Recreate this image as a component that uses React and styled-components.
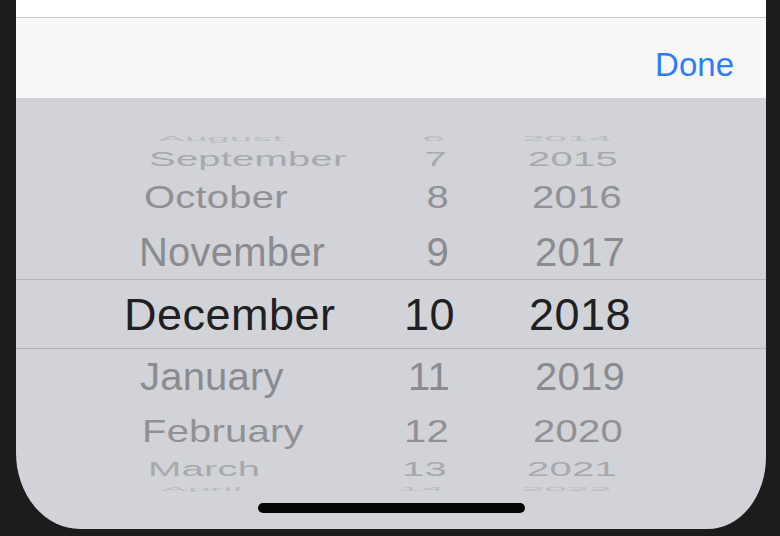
import styled, { createGlobalStyle } from "styled-components";

const GlobalStyle = createGlobalStyle`
  html, body {
    margin: 0;
    padding: 0;
    background: #1c1c1c;
    font-family: "Liberation Sans", Arial, sans-serif;
  }
  #root {
    height: 536px;
    overflow: hidden;
  }
`;

const rows = [
  { m: "August", d: "6", y: "2014", h: 23, sy: 0.18, mx: 34, dx: -5, yx: -12, tone: 4 },
  { m: "September", d: "7", y: "2015", h: 20, sy: 0.5, mx: 25, dx: -3, yx: -6, tone: 3 },
  { m: "October", d: "8", y: "2016", h: 55, sy: 0.8, mx: 20, dx: -1, yx: -2, tone: 2 },
  { m: "November", d: "9", y: "2017", h: 55, sy: 1, mx: 15, dx: -1, yx: 1, tone: 1 },
  { m: "December", d: "10", y: "2018", h: 70, sy: 1, mx: 0, dx: 5, yx: 1, tone: 0 },
  { m: "January", d: "11", y: "2019", h: 56, sy: 0.95, mx: 16, dx: 0, yx: 1, tone: 1 },
  { m: "February", d: "12", y: "2020", h: 51, sy: 0.8, mx: 18, dx: -1, yx: -1, tone: 2 },
  { m: "March", d: "13", y: "2021", h: 26, sy: 0.5, mx: 24, dx: -3, yx: -7, tone: 3 },
  { m: "April", d: "14", y: "2022", h: 13, sy: 0.15, mx: 37, dx: -6, yx: -12, tone: 4 },
];

const tones = ["#202022", "#8b8b8f", "#919195", "#a8a9ad", "#babbbf"];

function App() {
  return (
    <>
      <GlobalStyle />
      <Screen>
        <TopStrip />
        <Toolbar>
          <DoneButton>Done</DoneButton>
        </Toolbar>
        <Picker>
          {rows.map((r) => (
            <Row key={r.m} $h={r.h} $selected={r.tone === 0}>
              <MonthCell>
                <Item
                  $tone={r.tone}
                  style={{ transform: `translateX(${r.mx}px) scaleY(${r.sy})` }}
                >
                  {r.m}
                </Item>
              </MonthCell>
              <DayCell>
                <Item
                  $tone={r.tone}
                  style={{ transform: `translateX(${r.dx}px) scaleY(${r.sy})` }}
                >
                  {r.d}
                </Item>
              </DayCell>
              <YearCell>
                <Item
                  $tone={r.tone}
                  style={{ transform: `translateX(${r.yx}px) scaleY(${r.sy})` }}
                >
                  {r.y}
                </Item>
              </YearCell>
            </Row>
          ))}
          <HomeIndicator />
        </Picker>
      </Screen>
    </>
  );
}

export default App;

const Screen = styled.div`
  width: 750px;
  height: 529px;
  margin-left: 16px;
  display: flex;
  flex-direction: column;
  background: #d1d3d8;
  border-bottom-left-radius: 64px 76px;
  border-bottom-right-radius: 58px 72px;
  overflow: hidden;
`;

const TopStrip = styled.div`
  height: 17px;
  background: #ffffff;
  border-bottom: 1px solid #c6c6c8;
`;

const Toolbar = styled.div`
  height: 80px;
  display: flex;
  align-items: center;
  justify-content: flex-end;
  background: #f8f8f8;
  padding-right: 32px;
`;

const DoneButton = styled.button`
  border: none;
  background: none;
  padding: 12px 0 0;
  margin: 0;
  font-family: "Liberation Sans", Arial, sans-serif;
  font-size: 33px;
  line-height: 1;
  color: #2d7ef6;
  cursor: pointer;
`;

const Picker = styled.div`
  position: relative;
  flex: 1;
  padding-top: 28px;
  overflow: hidden;
`;

const Row = styled.div`
  box-sizing: border-box;
  height: ${(p) => p.$h}px;
  display: flex;
  align-items: center;
  border-top: ${(p) => (p.$selected ? "1px solid #b3b4b8" : "none")};
  border-bottom: ${(p) => (p.$selected ? "1px solid #b3b4b8" : "none")};
`;

const MonthCell = styled.div`
  width: 364px;
  box-sizing: border-box;
  padding-left: 108px;
  white-space: nowrap;
`;

const DayCell = styled.div`
  width: 70px;
  text-align: right;
`;

const YearCell = styled.div`
  width: 258px;
  text-align: center;
`;

const Item = styled.span`
  display: inline-block;
  font-size: ${(p) => (p.$tone === 0 ? 45 : 40)}px;
  letter-spacing: ${(p) => (p.$tone === 0 ? 0.5 : 0.2)}px;
  line-height: 1;
  color: ${(p) => tones[p.$tone]};
  transform-origin: center center;
`;

const HomeIndicator = styled.div`
  position: absolute;
  left: 50%;
  bottom: 16px;
  width: 267px;
  height: 10px;
  margin-left: -133px;
  border-radius: 5px;
  background: #050505;
`;
